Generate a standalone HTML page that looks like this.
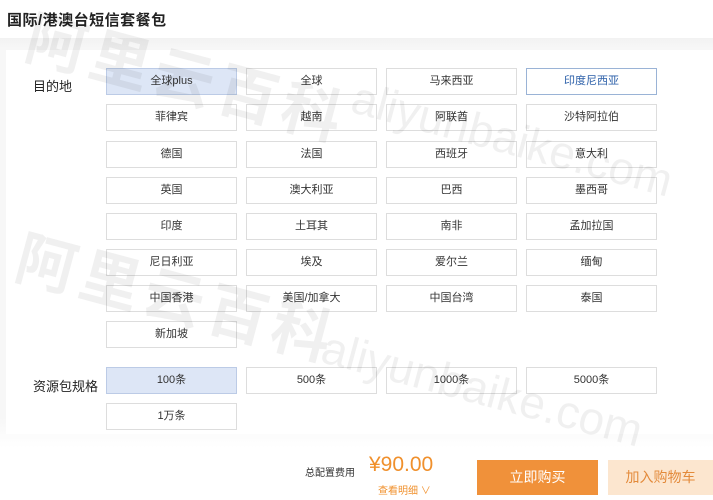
<!DOCTYPE html>
<html><head><meta charset="utf-8"><style>
*{margin:0;padding:0;box-sizing:border-box}
body{width:713px;height:500px;overflow:hidden;background:#fff;font-family:"Liberation Sans","Noto Sans CJK SC",sans-serif;position:relative;color:#333}
.title{position:absolute;left:7px;top:9px;font-size:15px;font-weight:bold;color:#222;letter-spacing:0.5px}
.bg{position:absolute;left:0;top:38px;width:713px;height:410px;background:linear-gradient(#f2f2f2,#f7f7f7 10px,#f7f7f7 380px,#fff)}
.card{position:absolute;left:6px;top:50px;width:707px;height:384px;background:#fff}
.lbl{position:absolute;left:33px;font-size:13px;color:#222}
.b{position:absolute;width:131px;height:27px;border:1px solid #ddd;font-size:11px;text-align:center;line-height:25px;color:#333;background:#fff}
.sel{background:#dde6f6;border-color:#bccbe6}
.sel2{border-color:#9ab3d6;color:#2a5ea8}
.wm{position:absolute;color:rgba(0,0,0,0.06);font-weight:bold;white-space:nowrap;transform:rotate(15deg);transform-origin:left top}
</style></head><body>
<div class="title">国际/港澳台短信套餐包</div>
<div class="bg"></div>
<div class="card"></div>
<div class="lbl" style="top:76px">目的地</div>
<div class="lbl" style="top:376px">资源包规格</div>
<div class="b sel" style="left:106px;top:68px">全球plus</div>
<div class="b" style="left:246px;top:68px">全球</div>
<div class="b" style="left:386px;top:68px">马来西亚</div>
<div class="b sel2" style="left:526px;top:68px">印度尼西亚</div>
<div class="b" style="left:106px;top:104px">菲律宾</div>
<div class="b" style="left:246px;top:104px">越南</div>
<div class="b" style="left:386px;top:104px">阿联酋</div>
<div class="b" style="left:526px;top:104px">沙特阿拉伯</div>
<div class="b" style="left:106px;top:141px">德国</div>
<div class="b" style="left:246px;top:141px">法国</div>
<div class="b" style="left:386px;top:141px">西班牙</div>
<div class="b" style="left:526px;top:141px">意大利</div>
<div class="b" style="left:106px;top:177px">英国</div>
<div class="b" style="left:246px;top:177px">澳大利亚</div>
<div class="b" style="left:386px;top:177px">巴西</div>
<div class="b" style="left:526px;top:177px">墨西哥</div>
<div class="b" style="left:106px;top:213px">印度</div>
<div class="b" style="left:246px;top:213px">土耳其</div>
<div class="b" style="left:386px;top:213px">南非</div>
<div class="b" style="left:526px;top:213px">孟加拉国</div>
<div class="b" style="left:106px;top:249px">尼日利亚</div>
<div class="b" style="left:246px;top:249px">埃及</div>
<div class="b" style="left:386px;top:249px">爱尔兰</div>
<div class="b" style="left:526px;top:249px">缅甸</div>
<div class="b" style="left:106px;top:285px">中国香港</div>
<div class="b" style="left:246px;top:285px">美国/加拿大</div>
<div class="b" style="left:386px;top:285px">中国台湾</div>
<div class="b" style="left:526px;top:285px">泰国</div>
<div class="b" style="left:106px;top:321px">新加坡</div>
<div class="b sel" style="left:106px;top:367px">100条</div>
<div class="b" style="left:246px;top:367px">500条</div>
<div class="b" style="left:386px;top:367px">1000条</div>
<div class="b" style="left:526px;top:367px">5000条</div>
<div class="b" style="left:106px;top:403px">1万条</div>
<div style="position:absolute;left:305px;top:464px;font-size:10px;color:#333">总配置费用</div>
<div style="position:absolute;left:369px;top:453px;font-size:21px;color:#f0902c">¥90.00</div>
<div style="position:absolute;left:378px;top:482px;font-size:10px;color:#f0902c">查看明细 ∨</div>
<div style="position:absolute;left:477px;top:460px;width:121px;height:35px;background:#f0913a;color:#fff;font-size:14px;text-align:center;line-height:35px">立即购买</div>
<div style="position:absolute;left:608px;top:460px;width:105px;height:35px;background:#fce6cf;color:#e38a3a;font-size:14px;text-align:center;line-height:35px">加入购物车</div>
<div class="wm" style="left:40px;top:-10px;font-size:60px;letter-spacing:6px">阿里云百科</div>
<div class="wm" style="left:360px;top:70px;font-size:46px;font-weight:normal">aliyunbaike.com</div>
<div class="wm" style="left:30px;top:210px;font-size:60px;letter-spacing:6px">阿里云百科</div>
<div class="wm" style="left:330px;top:320px;font-size:46px;font-weight:normal">aliyunbaike.com</div>
</body></html>
